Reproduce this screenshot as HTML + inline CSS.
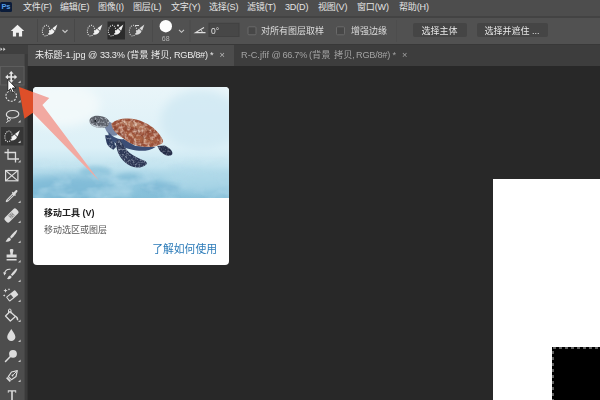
<!DOCTYPE html>
<html lang="zh-CN">
<head>
<meta charset="utf-8">
<title>Photoshop</title>
<style>
html,body{margin:0;padding:0;}
html{background:#3c3c3c;overflow:hidden;}
body{width:600px;height:400px;overflow:hidden;position:relative;background:#282828;
 font-family:"Liberation Sans","Noto Sans CJK SC",sans-serif;color:#dcdcdc;}
.abs{position:absolute;}
#root{position:absolute;left:0;top:0;width:600px;height:400px;overflow:hidden;filter:blur(0.450px);}
#menubar{left:0;top:0;width:600px;height:16px;background:#4d4d4d;}
#menubar span{position:absolute;top:0px;letter-spacing:-0.150px;font-size:9px;line-height:14px;color:#e4e4e4;white-space:nowrap;}
#menuline{left:0;top:16px;width:600px;height:2px;background:#434343;z-index:2;}
#optbar{left:0;top:17px;width:600px;height:27px;background:#515151;}
#optline{left:0;top:43.500px;width:600px;height:1.500px;background:#383838;}
#tabbar{left:0;top:45px;width:600px;height:21px;background:#3d3d3d;}
#tabactive{left:28px;top:45px;width:206px;height:21px;background:#4c4c4c;}
#tabbar span,#tabactive span{position:absolute;white-space:nowrap;font-size:9.2px;line-height:14px;}
#toolbar{left:0;top:45px;width:27px;height:355px;background:#4d4d4d;}
#toolhead{left:0;top:45px;width:28px;height:9px;background:#3f3f3f;}
.sep{position:absolute;width:1px;background:#3d3d3d;}
.otext{position:absolute;font-size:9px;line-height:14px;color:#dcdcdc;white-space:nowrap;}
.btn{position:absolute;background:#454545;border-radius:2px;font-size:9px;line-height:16px;text-align:center;color:#e6e6e6;}
#canvasdoc{left:493px;top:179px;width:107px;height:221px;background:#fff;}
#blackrect{left:552px;top:347px;width:48px;height:53px;background:#000;}
#tip{left:32.500px;top:87px;width:196px;height:178px;background:#fff;border-radius:4px;overflow:hidden;}
#tip .img{position:absolute;left:0;top:0;width:196px;height:112px;background:linear-gradient(180deg,#eaf5f9 0%,#dbeef5 45%,#a9d4e4 75%,#8cc4d9 100%);}
#tip .t1{position:absolute;left:11.500px;top:119px;font-size:9px;font-weight:bold;color:#222;line-height:14px;}
#tip .t2{position:absolute;left:11.500px;top:136px;font-size:9px;color:#555;line-height:14px;}
#tip .t3{position:absolute;right:11.500px;top:154.500px;font-size:10.800px;color:#2a7ab8;line-height:14px;}
</style>
</head>
<body>
<div id="root">
<div id="menubar" class="abs">
 <span style="left:23px">文件(F)</span>
 <span style="left:60px">编辑(E)</span>
 <span style="left:98px">图像(I)</span>
 <span style="left:133px">图层(L)</span>
 <span style="left:171px">文字(Y)</span>
 <span style="left:209px">选择(S)</span>
 <span style="left:247px">滤镜(T)</span>
 <span style="left:285px">3D(D)</span>
 <span style="left:318px">视图(V)</span>
 <span style="left:357px">窗口(W)</span>
 <span style="left:399px">帮助(H)</span>
</div>
<div class="abs" style="left:0;top:2px;width:12px;height:10px;background:#0b1c3a;border-radius:1.500px"></div><span class="abs" style="left:1.500px;top:2px;font-size:7.500px;line-height:10px;font-weight:bold;color:#559fea;letter-spacing:-0.2px">Ps</span>
<div id="menuline" class="abs"></div>
<div id="optbar" class="abs">
 <!-- coordinates inside optbar are page coords minus 17 in y -->
 <svg class="abs" style="left:0;top:0" width="600" height="27" viewBox="0 17 600 27">
  <!-- home -->
  <path d="M17.500 24.800 L10.800 31 H12.900 V36.500 H16.100 V32.800 H18.900 V36.500 H22.100 V31 H24.200 Z" fill="#f0f0f0"/>
  <rect x="37" y="19" width="1" height="23" fill="#484848"/>
  <rect x="74" y="19" width="1" height="23" fill="#484848"/>
  <!-- brush preset icon -->
  <g id="qs0">
   <ellipse cx="46" cy="30.600" rx="3.600" ry="5.300" fill="none" stroke="#dadada" stroke-width="1.100" stroke-dasharray="1.100 1.100" transform="rotate(8 46 30.600)"/>
   <path d="M57.400 24.500 L55.100 30.700 L52.400 28.200 Z" fill="#f2f2f2"/>
   <path d="M51.900 28.800 L54.500 31.300 C53.800 33.600 51.200 35.200 48.300 34.700 C49.300 33.500 49.200 30.600 51.900 28.800 Z" fill="#f2f2f2"/>
  </g>
  <path d="M62.5 30 L65 32.5 L67.5 30" fill="none" stroke="#c8c8c8" stroke-width="1.1"/>
  <!-- three mode icons -->
  <use href="#qs0" x="45" y="0"/>
  <rect x="107.5" y="21.5" width="17.5" height="18" fill="#2c2c2c"/>
  <use href="#qs0" x="66" y="0"/>
  <circle cx="118" cy="25.5" r="1.1" fill="#ddd"/>
  <use href="#qs0" x="87" y="0" opacity="0.85"/>
  <rect x="135" y="25" width="4" height="1" fill="#ddd"/>
  <rect x="152" y="20" width="1" height="22" fill="#4a4a4a"/>
  <!-- brush size -->
  <circle cx="165.8" cy="26.2" r="6.2" fill="#fdfdfd"/>
  <path d="M179 29.8 L181.5 32.3 L184 29.8" fill="none" stroke="#c8c8c8" stroke-width="1.1"/>
  <rect x="189.500" y="20" width="1" height="22" fill="#4a4a4a"/>
  <!-- angle -->
  <path d="M204 27.5 L195.500 32.600 H205.500" fill="none" stroke="#e0e0e0" stroke-width="1.1"/>
  <path d="M200.5 29.6 Q202.300 30.800 202.300 32.600" fill="none" stroke="#e0e0e0" stroke-width="0.9"/>
  <rect x="209" y="23.300" width="30" height="13.200" fill="#474747" stroke="#414141" stroke-width="1"/>
  <!-- checkboxes -->
  <rect x="248" y="26.800" width="8" height="8" rx="1" fill="#474747" stroke="#6a6a6a" stroke-width="1"/>
  <rect x="336.500" y="26.800" width="8" height="8" rx="1" fill="#474747" stroke="#6a6a6a" stroke-width="1"/>
  <rect x="396" y="20" width="1" height="22" fill="#4d4d4d"/>
 </svg>
 <span class="otext" style="left:161.800px;top:14.500px;font-size:7px;color:#b4b4b4">68</span>
 <span class="otext" style="left:211px;top:6.500px;font-size:8.500px;color:#e0e0e0">0°</span>
 <span class="otext" style="left:261px;top:7px">对所有图层取样</span>
 <span class="otext" style="left:351px;top:7px">增强边缘</span>
 <div class="btn" style="left:412.500px;top:5.500px;width:54px;height:14px;">选择主体</div>
 <div class="btn" style="left:476.500px;top:5.500px;width:71px;height:14px;">选择并遮住 ...</div>
</div>
<div id="optline" class="abs"></div>
<div id="tabbar" class="abs">
 <span style="left:241px;top:3px;color:#a3a3a3">R-C.jfif @</span>
 <span style="left:282.500px;top:3px;color:#a3a3a3;letter-spacing:-0.3px">66.7%</span>
 <span style="left:309px;top:3px;color:#a3a3a3">(背景</span>
 <span style="left:334px;top:3px;color:#a3a3a3">拷贝,</span>
 <span style="left:356px;top:3px;color:#a3a3a3;letter-spacing:-0.25px">RGB/8#)</span>
 <span style="left:392.500px;top:3px;color:#a3a3a3">*</span>
 <span style="left:402px;top:3px;color:#a3a3a3">×</span>
</div>
<div id="tabactive" class="abs">
 <span style="left:7px;top:3px;color:#ececec">未标题-1.jpg @</span>
 <span style="left:72px;top:3px;color:#ececec;letter-spacing:-0.300px">33.3%</span>
 <span style="left:99px;top:3px;color:#ececec">(背景</span>
 <span style="left:123px;top:3px;color:#ececec">拷贝,</span>
 <span style="left:146px;top:3px;color:#ececec;letter-spacing:-0.3px">RGB/8#)</span>
 <span style="left:182px;top:3px;color:#ececec">*</span>
 <span style="left:191.500px;top:3px;color:#bdbdbd">×</span>
</div>
<div id="toolbar" class="abs"></div>
<div id="toolhead" class="abs"></div>
<svg class="abs" style="left:0;top:0" width="40" height="400" viewBox="0 0 40 400">
 <!-- header chevrons -->
 <path d="M0.5 47.5 L2.500 49.300 L0.500 51.100 Z M3.300 47.500 L5.500 49.300 L3.300 51.100 Z" fill="#d8d8d8"/>
 <rect x="24.600" y="54" width="3" height="346" fill="#3a3a3a"/>
 <!-- hovered move cell -->
 <rect x="0.500" y="66.500" width="23.500" height="18.500" fill="#4c4c4c" stroke="#5d5d5d" stroke-width="1"/>
 <!-- move tool -->
 <g fill="#e6e6e6">
  <path d="M11.200 71 L13.600 73.800 H12 V76.200 H14.400 V74.600 L17.200 77 L14.400 79.400 V77.800 H12 V80.200 H13.600 L11.200 83 L8.800 80.200 H10.400 V77.800 H8 V79.400 L5.200 77 L8 74.600 V76.200 H10.400 V73.800 H8.800 Z"/>
 </g>
 <path d="M20.6 80.4 V83 H18 Z" fill="#c8c8c8"/>
 <!-- elliptical marquee -->
 <circle cx="11.200" cy="96" r="5.300" fill="none" stroke="#dcdcdc" stroke-width="1.100" stroke-dasharray="2 1.300"/>
 <path d="M20.6 99.9 V102.5 H18 Z" fill="#c8c8c8"/>
 <!-- lasso -->
 <path d="M12.500 110.500 C16.500 110.300 19 112 18.800 114.200 C18.600 116.600 15 118.200 11.500 118 C8 117.800 6 116.200 6.400 114.200 C6.800 112 9.500 110.600 12.500 110.500 Z" fill="none" stroke="#dcdcdc" stroke-width="1.200"/>
 <path d="M8.500 117.400 C7.200 118.200 7 119.800 8 120.600 C9 121.400 10.600 120.800 10.400 119.400 C10.200 118.400 9 118 8.500 118.400 M8.200 120.800 C7.800 121.800 7 122.400 6.200 122.600" fill="none" stroke="#dcdcdc" stroke-width="1"/>
 <path d="M20.6 119.9 V122.5 H18 Z" fill="#c8c8c8"/>
 <!-- quick select (active) -->
 <rect x="1" y="127" width="22.500" height="18.500" fill="#363636"/>
 <g transform="translate(-37.500 105.800)">
   <ellipse cx="46" cy="30.600" rx="3.600" ry="5.300" fill="none" stroke="#dadada" stroke-width="1.100" stroke-dasharray="1.100 1.100" transform="rotate(8 46 30.600)"/>
   <path d="M57.400 24.500 L55.100 30.700 L52.400 28.200 Z" fill="#f2f2f2"/>
   <path d="M51.900 28.800 L54.500 31.300 C53.800 33.600 51.200 35.200 48.300 34.700 C49.300 33.500 49.200 30.600 51.900 28.800 Z" fill="#f2f2f2"/>
 </g>
 <path d="M20.6 140.4 V143 H18 Z" fill="#c8c8c8"/>
 <!-- crop -->
 <path d="M8 149 V159 H19 M4.500 152.500 H15.500 V162.500" fill="none" stroke="#dcdcdc" stroke-width="1.300"/>
 <path d="M20.6 159.9 V162.5 H18 Z" fill="#c8c8c8"/>
 <!-- frame -->
 <rect x="5.600" y="170.500" width="12.300" height="10.300" fill="none" stroke="#dcdcdc" stroke-width="1.200"/>
 <path d="M5.600 170.500 L17.900 180.800 M17.900 170.500 L5.600 180.800" stroke="#dcdcdc" stroke-width="1.100"/>
 <!-- eyedropper -->
 <path d="M15.800 190.300 C16.800 189.600 18 190.800 17.300 191.800 L15.300 194.200 L16 195 L15 196 L14.300 195.400 L8.500 201.200 L6.500 202.200 L5.600 201.300 L6.600 199.400 L12.400 193.500 L11.800 192.800 L12.800 191.800 L13.500 192.500 Z" fill="#dcdcdc"/>
 <path d="M12.700 194.800 L7.500 200 L7.900 200.400 L13.100 195.200 Z" fill="#535353"/>
 <path d="M20.6 200.4 V203 H18 Z" fill="#c8c8c8"/>
 <!-- healing -->
 <g transform="rotate(-45 11.500 215.500)">
  <rect x="3.500" y="212.300" width="16" height="6.400" rx="2" fill="#dcdcdc"/>
  <rect x="9" y="213.300" width="5" height="4.400" fill="#535353" opacity="0.550"/>
  <circle cx="10.300" cy="214.500" r="0.500" fill="#eee"/><circle cx="12.700" cy="214.500" r="0.500" fill="#eee"/>
  <circle cx="10.300" cy="216.500" r="0.500" fill="#eee"/><circle cx="12.700" cy="216.500" r="0.500" fill="#eee"/>
 </g>
 <path d="M20.6 220.4 V223 H18 Z" fill="#c8c8c8"/>
 <!-- brush -->
 <path d="M16.800 230 C15 231 11.500 234.500 10 237 L11.600 238.400 C13.800 236.500 16.800 232.500 17.300 230.500 Z" fill="#dcdcdc"/>
 <path d="M9.400 237.600 C7.800 237.800 7.200 239.200 5.600 241.600 C8.400 242.200 10.600 241.200 11 239 Z" fill="#dcdcdc"/>
 <path d="M20.6 240.4 V243 H18 Z" fill="#c8c8c8"/>
 <!-- stamp -->
 <path d="M9.800 250 C9.800 248.600 13.400 248.600 13.400 250 C13.400 251.800 12.600 252.600 12.800 254.400 H16.600 V257.600 H6.600 V254.400 H10.400 C10.600 252.600 9.800 251.800 9.800 250 Z M6.600 259 H16.600 V260.600 H6.600 Z" fill="#dcdcdc"/>
 <path d="M20.6 259.9 V262.5 H18 Z" fill="#c8c8c8"/>
 <!-- history brush -->
 <path d="M16.800 268.500 C15.200 269.500 12.200 272.500 10.800 274.800 L12.300 276.100 C14.300 274.400 16.900 271 17.300 269 Z" fill="#dcdcdc"/>
 <path d="M10.200 275.400 C8.800 275.600 8.200 276.800 7 279 C9.400 279.500 11.300 278.600 11.700 276.700 Z" fill="#dcdcdc"/>
 <path d="M4.500 273.500 C5 270.800 7.500 269 10.500 269.300" fill="none" stroke="#dcdcdc" stroke-width="1.100"/>
 <path d="M3.200 272.200 L6.400 272.800 L4.300 275.400 Z" fill="#dcdcdc"/>
 <path d="M20.6 279.4 V282 H18 Z" fill="#c8c8c8"/>
 <!-- magic eraser -->
 <g transform="rotate(-38 12 296)">
  <rect x="6.500" y="293" width="11.500" height="6" rx="1" fill="#dcdcdc"/>
  <rect x="7.500" y="294" width="4.500" height="4" fill="#535353"/>
 </g>
 <path d="M5.500 288.500 L6.100 290 L7.600 290.600 L6.100 291.200 L5.500 292.700 L4.900 291.200 L3.400 290.600 L4.900 290 Z M9 288 L9.400 288.900 L10.300 289.300 L9.400 289.700 L9 290.600 L8.600 289.700 L7.700 289.300 L8.600 288.900 Z M4.200 294.200 L4.600 295.100 L5.500 295.500 L4.600 295.900 L4.200 296.800 L3.800 295.900 L2.900 295.500 L3.800 295.100 Z" fill="#dcdcdc"/>
 <path d="M20.6 299.4 V302 H18 Z" fill="#c8c8c8"/>
 <!-- paint bucket -->
 <path d="M10 311.500 L15.500 316.500 L10.300 321 L5.500 316 Z" fill="none" stroke="#dcdcdc" stroke-width="1.300" stroke-linejoin="round"/>
 <path d="M8.500 313 V310 C8.500 308.800 11 308.800 11 310 V313.500" fill="none" stroke="#dcdcdc" stroke-width="1"/>
 <path d="M15 315.500 C17.500 316 18.500 318 18.300 320.500 C17.300 320.800 16.400 319.800 16.500 318.600 Z" fill="#dcdcdc"/>
 <path d="M20.6 319.4 V322 H18 Z" fill="#c8c8c8"/>
 <!-- blur drop -->
 <path d="M11.300 329 C12.800 331.800 15.400 334.300 15.400 337 C15.400 339.300 13.600 341 11.300 341 C9 341 7.200 339.300 7.200 337 C7.200 334.300 9.800 331.800 11.300 329 Z" fill="#dcdcdc"/>
 <path d="M20.6 339.4 V342 H18 Z" fill="#c8c8c8"/>
 <!-- dodge -->
 <circle cx="13" cy="353.800" r="3.900" fill="#dcdcdc"/>
 <path d="M10.400 356.400 L5.500 361.500" stroke="#dcdcdc" stroke-width="1.500" stroke-linecap="round"/>
 <path d="M20.6 359.4 V362 H18 Z" fill="#c8c8c8"/>
 <!-- pen -->
 <g transform="rotate(45 12 376)">
  <path d="M12 368.500 L15.200 373.500 L14.200 379 H9.800 L8.800 373.500 Z" fill="none" stroke="#dcdcdc" stroke-width="1.200" stroke-linejoin="round"/>
  <path d="M12 369.500 V374.500" stroke="#dcdcdc" stroke-width="0.900"/>
  <circle cx="12" cy="375.300" r="0.900" fill="#dcdcdc"/>
  <rect x="9.400" y="380" width="5.200" height="1.800" fill="#dcdcdc"/>
 </g>
 <path d="M20.6 379.4 V382 H18 Z" fill="#c8c8c8"/>
 <!-- type -->
 <path d="M7.800 390.300 H16.200 V392.800 H15.300 V391.600 H12.800 V400 H11.200 V391.600 H8.700 V392.800 H7.800 Z" fill="#dcdcdc"/>
</svg>
<div id="canvasdoc" class="abs"></div>
<div id="blackrect" class="abs"></div>
<svg class="abs" style="left:540px;top:340px" width="60" height="60" viewBox="540 340 60 60">
 <path d="M553 400 V348 H600" fill="none" stroke="#c4c4c4" stroke-width="1" stroke-dasharray="3 3" stroke-dashoffset="2"/>
</svg>
<svg class="abs" style="left:0;top:0" width="120" height="200" viewBox="0 0 120 200"><path d="M18.700 86.800 L48.800 98.100 L41.900 105 L98.600 180.700 L32.500 113 L24.400 118.800 Z" fill="#de4f29"/></svg>
<div id="tip" class="abs">
 <svg class="abs" style="left:0;top:0" width="196" height="111" viewBox="32.500 87 196 111">
  <defs>
   <linearGradient id="bgv" x1="0" y1="0" x2="0" y2="1">
    <stop offset="0" stop-color="#e9f5f9"/>
    <stop offset="0.550" stop-color="#dcf0f7"/>
    <stop offset="0.720" stop-color="#c2e3ef"/>
    <stop offset="0.860" stop-color="#93c8df"/>
    <stop offset="1" stop-color="#84bed8"/>
   </linearGradient>
   <filter id="b1" x="-20%" y="-20%" width="140%" height="140%"><feGaussianBlur stdDeviation="5"/></filter>
   <filter id="b2" x="-20%" y="-20%" width="140%" height="140%"><feGaussianBlur stdDeviation="2"/></filter>
   <filter id="b3" x="-10%" y="-10%" width="120%" height="120%"><feGaussianBlur stdDeviation="0.450"/></filter>
   <filter id="mot" x="0" y="0" width="100%" height="100%">
    <feTurbulence type="fractalNoise" baseFrequency="0.300" numOctaves="2" seed="7" result="n"/>
    <feColorMatrix in="n" type="matrix" values="0 0 0 0 1  0 0 0 0 0.900  0 0 0 0 0.800  0 0 0 2.600 -1.050" result="m"/>
    <feComposite in="m" in2="SourceGraphic" operator="in"/>
   </filter>
   <filter id="spk" x="0" y="0" width="100%" height="100%">
    <feTurbulence type="fractalNoise" baseFrequency="0.550" numOctaves="1" seed="3" result="n"/>
    <feColorMatrix in="n" type="matrix" values="0 0 0 0 0.780  0 0 0 0 0.820  0 0 0 0 0.900  0 0 0 3.200 -1.500" result="m"/>
    <feComposite in="m" in2="SourceGraphic" operator="in"/>
   </filter>
   <filter id="wat" x="0" y="0" width="100%" height="100%">
    <feTurbulence type="fractalNoise" baseFrequency="0.045 0.080" numOctaves="3" seed="11" result="n"/>
    <feColorMatrix in="n" type="matrix" values="0 0 0 0 0.450  0 0 0 0 0.700  0 0 0 0 0.830  0 0 0 3.000 -1.300" result="m"/>
    <feComposite in="m" in2="SourceGraphic" operator="in"/>
   </filter>
   <linearGradient id="fadev" x1="0" y1="0" x2="0" y2="1">
    <stop offset="0" stop-color="#fff" stop-opacity="0"/>
    <stop offset="0.620" stop-color="#fff" stop-opacity="0"/>
    <stop offset="0.800" stop-color="#fff" stop-opacity="0.900"/>
    <stop offset="1" stop-color="#fff" stop-opacity="1"/>
   </linearGradient>
   <mask id="mfade"><rect x="32" y="87" width="197" height="111" fill="url(#fadev)"/></mask>
  </defs>
  <rect x="32" y="87" width="197" height="111" fill="url(#bgv)"/>
  <g filter="url(#b1)">
   <ellipse cx="60" cy="105" rx="40" ry="22" fill="#f3f9fb" opacity="0.900"/>
   <ellipse cx="200" cy="120" rx="40" ry="30" fill="#cfe9f3" opacity="0.800"/>
   <ellipse cx="70" cy="190" rx="50" ry="14" fill="#7db9d6" opacity="0.800"/>
   <ellipse cx="200" cy="180" rx="40" ry="12" fill="#b4dbea" opacity="0.700"/>
  </g>
  <g filter="url(#b2)">
   <ellipse cx="95" cy="172" rx="16" ry="6" fill="#8cc3db" opacity="0.800"/>
   <ellipse cx="130" cy="178" rx="14" ry="5" fill="#80bbd6" opacity="0.700"/>
   <ellipse cx="160" cy="188" rx="20" ry="6" fill="#7ab6d3" opacity="0.600"/>
   <ellipse cx="115" cy="192" rx="18" ry="5" fill="#a6d3e5" opacity="0.700"/>
  </g>
  <g mask="url(#mfade)" opacity="0.550"><rect x="32" y="87" width="197" height="111" fill="#fff" filter="url(#wat)"/></g>
  <path d="M18.700 86.800 L48.800 98.100 L41.900 105 L98.600 180.700 L32.500 113 L24.400 118.800 Z" fill="#f2a9a1" filter="url(#b3)"/>
  <!-- turtle -->
  <g filter="url(#b3)">
   <!-- far front flipper -->
   <path id="ff" d="M104.400 135.600 L108.100 134.700 C112 139 114.500 143 115.600 146.900 L112.800 149.700 C109.500 148 107 146 106.200 143.100 Z" fill="#2c3b5e"/>
   <!-- rear flipper -->
   <path id="rf" d="M156.800 145.900 L164.300 145.600 C168 147.500 170.500 149.500 171.700 152 C172.200 154 171.500 155.200 170 155.500 C168 155.800 166.500 155.600 165.300 155.300 C162 153.500 160 151.500 158.700 149.700 Z" fill="#272f49"/>
   <!-- neck -->
   <path d="M104 120 C108 121 111 122.500 113.500 124.500 L117 135 C113 136.500 109 135.500 106.500 132 C105 129.500 104.500 127.500 104 126 Z" fill="#7686a5"/>
   <!-- underside -->
   <path d="M108 132 C112 137 118 140 123 139 L135 146 L155 147 C150 150.500 143 151.500 136 150.500 C128 149.500 119 146 113 142 C109.500 139 107.500 135.500 108 132 Z" fill="#3a4e74"/>
   <!-- shell -->
   <path id="sh" d="M110.900 123.400 C115 120 121 118.300 126.900 118.500 C133 118.500 139 120 143.700 122.500 C148.500 124.500 152 127 155 130 C158.500 133.500 161 137 162.500 140.300 C163 142 162 143.500 160.600 144 C157 146 153 146.800 149.300 146.900 C144 147 139 146.500 134.300 145 C130 143.500 126 141 123.100 138.400 C119.500 136 116.500 134 114.700 131.900 C112.500 129.500 111 126.500 110.900 123.400 Z" fill="#9a4f37"/>
   <path d="M118 123 C123 120.500 130 120.500 136 122 C141 123.500 146 126.500 150 130 C146 131 140 130 135 128 C129 126 123 125 118 123 Z" fill="#c08a6c" opacity="0.600"/>
   <path d="M124 131 C130 133 138 136 146 137.500 C151 138.500 156 139.500 159 140 C156 143 150 144 144 143 C136 141.500 129 137 124 131 Z" fill="#b4714f" opacity="0.550"/>
   <path d="M114 126 C117 130 121 134 126 137 C122 137 118 134.500 115.500 131.500 Z" fill="#7a3d2d" opacity="0.700"/>
   <use href="#sh" filter="url(#mot)" opacity="0.600"/>
   <path d="M122 121 L127 128 L137 131 L143 138 L154 141 M127 128 L121 134 M137 131 L133 140 M143 138 L141 146 M131 119.500 L137 131 M143 123 L147 131 L143 138 M147 131 L156 133" fill="none" stroke="#6e3323" stroke-width="0.700" opacity="0.550"/>
   <!-- big front flipper -->
   <path id="bf" d="M115.600 141.200 C117 140 119 139.800 120.300 140.300 C122.500 145 125.500 149.500 128.700 152.500 C133 156 139 159 144.700 160.900 C146.500 162 146.800 163.800 145.600 164.700 C143 166.800 139.500 167.800 136.200 167.500 C132 167 128 165.500 125 162.800 C121.500 160 119 156 117.500 152.500 C116 148.500 115.300 144.500 115.600 141.200 Z" fill="#2e3956"/>
   <use href="#bf" filter="url(#spk)" opacity="0.550"/>
   <use href="#ff" filter="url(#spk)" opacity="0.450"/>
   <use href="#rf" filter="url(#spk)" opacity="0.350"/>
   <!-- head -->
   <path id="hd" d="M89 120.500 C89.300 117.500 93 115.600 97.500 115.800 C102.500 116 107 118 108.600 121 C109.400 123.500 108.300 126 105.500 127.300 C101.500 128.600 96.500 128 93 126.300 C90.300 125 88.800 122.800 89 120.500 Z" fill="#5b6069"/>
   <use href="#hd" filter="url(#spk)" opacity="0.700"/>
   <path d="M90.500 123 C94 126 100 127.200 106.500 126 C103.500 128.300 97 128.300 93.500 126.500 C91.800 125.600 90.800 124.400 90.500 123 Z" fill="#c9d3da" opacity="0.850"/>
   <circle cx="94.800" cy="120.800" r="1.100" fill="#1d2026"/>
  </g>
 </svg>
 <div class="t1">移动工具 (V)</div>
 <div class="t2">移动选区或图层</div>
 <div class="t3">了解如何使用</div>
</div>
<svg class="abs" style="left:0;top:0" width="40" height="110" viewBox="0 0 40 110">
 <path d="M7.800 79.300 V91.300 L10.600 88.700 L12.500 92.800 L14.300 92 L12.400 88 H16 Z" fill="#fff" stroke="#1c1c1c" stroke-width="0.900" stroke-linejoin="round"/>
</svg>
</div>
</body>
</html>
